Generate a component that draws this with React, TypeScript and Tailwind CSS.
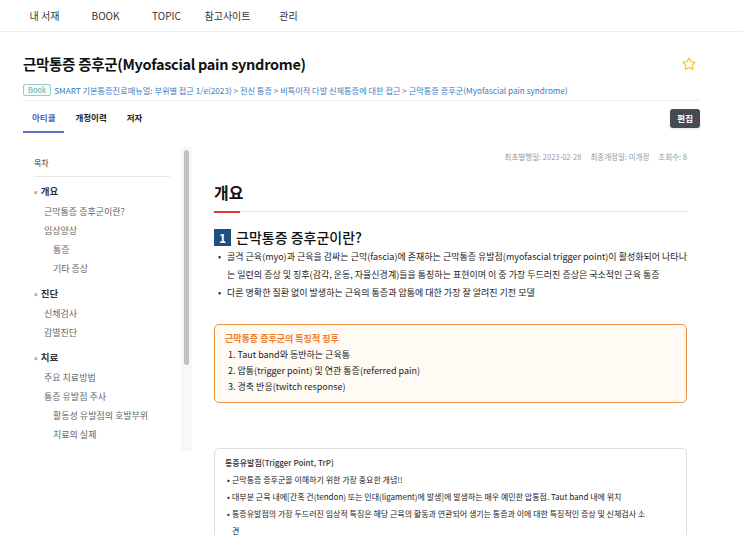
import { Star } from 'lucide-react';

const navItems = ['내 서재', 'BOOK', 'TOPIC', '참고사이트', '관리'];

interface TocGroup {
  title: string;
  items: { label: string; depth: number }[];
}

const toc: TocGroup[] = [
  {
    title: '개요',
    items: [
      { label: '근막통증 증후군이란?', depth: 1 },
      { label: '임상양상', depth: 1 },
      { label: '통증', depth: 2 },
      { label: '기타 증상', depth: 2 },
    ],
  },
  {
    title: '진단',
    items: [
      { label: '신체검사', depth: 1 },
      { label: '감별진단', depth: 1 },
    ],
  },
  {
    title: '치료',
    items: [
      { label: '주요 치료방법', depth: 1 },
      { label: '통증 유발점 주사', depth: 1 },
      { label: '활동성 유발점의 호발부위', depth: 2 },
      { label: '치료의 실제', depth: 2 },
    ],
  },
];

const signs = ['Taut band와 동반하는 근육통', '압통(trigger point) 및 연관 통증(referred pain)', '경축 반응(twitch response)'];

const trpNotes = [
  '근막통증 증후군을 이해하기 위한 가장 중요한 개념!!',
  '대부분 근육 내에[간혹 건(tendon) 또는 인대(ligament)에 발생]에 발생하는 매우 예민한 압통점. Taut band 내에 위치',
  '통증유발점의 가장 두드러진 임상적 특징은 해당 근육의 활동과 연관되어 생기는 통증과 이에 대한 특징적인 증상 및 신체검사 소견',
];

function Bullet({ children, tight }: { children: React.ReactNode; tight?: boolean }) {
  return (
    <li className="flex">
      <span className={tight ? 'w-[7px] shrink-0 pl-[2px]' : 'w-[13px] shrink-0 pl-[4px]'}>•</span>
      <span>{children}</span>
    </li>
  );
}

export default function App() {
  return (
    <div className="h-[535px] w-[743px] overflow-hidden bg-white font-['Noto_Sans_CJK_KR','Noto_Sans',sans-serif] text-[#222]">
      {/* top navigation */}
      <nav className="flex h-[32px] items-center border-b border-[#ececec] pl-[14px] text-[10px] text-[#333]">
        {navItems.map((item) => (
          <span key={item} className="w-[61px] text-center">
            {item}
          </span>
        ))}
      </nav>

      <div className="w-[700px] pl-[23px]">
        <div className="flex h-[52px] items-center justify-between pt-[12px]">
          <h1 className="text-[14.5px] font-semibold tracking-[-0.3px] text-[#111]">근막통증 증후군(Myofascial pain syndrome)</h1>
          <Star className="mr-[4px] h-[14px] w-[14px] text-[#f5c518]" strokeWidth={2} />
        </div>

        <div className="flex items-center border-b border-[#eee] pb-[4px] text-[8.2px] text-[#3d7cc0]">
          <span className="mr-[3px] rounded-[2px] border border-[#8fd0cf] bg-[#f4fbfb] px-[4px] text-[7.5px] leading-[10px] text-[#5aaeae]">Book</span>
          <span>
            SMART 기본통증진료매뉴얼: 부위별 접근 1/e(2023) <span className="text-[#888]">&gt;</span> 전신 통증{' '}
            <span className="text-[#888]">&gt;</span> 비특이적 다발 신체통증에 대한 접근{' '}
            <span className="text-[#888]">&gt;</span> 근막통증 증후군(Myofascial pain syndrome)
          </span>
        </div>

        {/* tabs */}
        <div className="flex items-center justify-between">
          <div className="flex text-[8.5px] font-semibold text-[#222]">
            <span className="border-b-2 border-[#5f74c9] px-[9px] pb-[7px] pt-[10px] text-[#4d66bf]">아티클</span>
            <span className="pl-[11px] pt-[10px]">개정이력</span>
            <span className="pl-[20px] pt-[10px]">저자</span>
          </div>
          <button className="mt-[2px] rounded-[3px] bg-[#464a53] px-[7px] py-[3px] text-[8.5px] font-semibold text-white shadow-sm">편집</button>
        </div>

        <div className="mt-[14px] flex">
          {/* table of contents */}
          <aside className="flex h-[304px] shrink-0">
            <div className="w-[147px] pl-[11px] pt-[10px] text-[9px]">
              <div className="border-b border-[#e6e6e6] pb-[7px] text-[8px] text-[#333]">목차</div>
              {toc.map((group, i) => (
                <div key={group.title} className={i === 0 ? 'mt-[4px]' : 'mt-[5px]'}>
                  <div className="flex h-[21px] items-center text-[9.5px] font-semibold text-[#333]">
                    <span className="mr-[3px] text-[8px] font-normal text-[#555]">«</span>
                    {group.title}
                  </div>
                  {group.items.map((item) => (
                    <div
                      key={item.label}
                      className={`flex h-[19px] items-center text-[#666] ${item.depth === 2 ? 'pl-[19px]' : 'pl-[10px]'}`}
                    >
                      {item.label}
                    </div>
                  ))}
                </div>
              ))}
            </div>
            {/* scroll track */}
            <div className="ml-[11px] w-[11px] bg-[#f8f8f8] px-[3px] pt-[3px]">
              <div className="h-[215px] rounded-full bg-[#c1c1c1]" />
            </div>
          </aside>

          {/* article */}
          <main className="ml-[22px] w-[473px] shrink-0">
            <div className="pt-[4px] text-right text-[7.5px] text-[#999]">
              최초발행일: 2023-02-28<span className="ml-[9px]">최종개정일: 미개정</span>
              <span className="ml-[9px]">조회수: 8</span>
            </div>

            <h2 className="mt-[18px] text-[16px] font-bold text-[#111]">개요</h2>
            <div className="mt-[7px] flex items-start">
              <div className="h-[2px] w-[26px] bg-[#e03a3a]" />
              <div className="h-[1px] flex-1 bg-[#e6e6e6]" />
            </div>

            <div className="mt-[14px] flex items-center">
              <span className="flex h-[17px] w-[17px] items-center justify-center bg-[#1e4f7f] text-[12px] font-bold text-white">1</span>
              <span className="ml-[5px] text-[14px] font-medium text-[#111]">근막통증 증후군이란?</span>
            </div>

            <ul className="text-[9px] leading-[18px] text-[#222]">
              <Bullet>
                골격 근육(myo)과 근육을 감싸는 근막(fascia)에 존재하는 근막통증 유발점(myofascial trigger point)이 활성화되어 나타나는 일련의 증상 및 징후(감각, 운동, 자율신경계)들을 통칭하는 표현이며 이 중 가장 두드러진 증상은 국소적인 근육 통증
              </Bullet>
              <Bullet>다른 명확한 질환 없이 발생하는 근육의 통증과 압통에 대한 가장 잘 알려진 기전 모델</Bullet>
            </ul>

            <div className="mt-[22px] rounded-[5px] border-[1.5px] border-[#ee913f] bg-[#fffaf3] px-[10px] pb-[7px] pt-[6px] text-[9px] leading-[16px]">
              <div className="font-semibold text-[#ee7d2e]">근막통증 증후군의 특징적 징후</div>
              <ol className="text-[#222]">
                {signs.map((s, i) => (
                  <li key={s} className="pl-[3px]">
                    {i + 1}. {s}
                  </li>
                ))}
              </ol>
            </div>

            <div className="mt-[45px] rounded-[5px] border border-[#dcdcdc] pl-[10px] pr-[34px] pt-[5px] text-[8px] leading-[17px]">
              <div className="font-medium text-[#333]">통증유발점(Trigger Point, TrP)</div>
              <ul className="text-[#222]">
                {trpNotes.map((n) => (
                  <Bullet key={n} tight>
                    {n}
                  </Bullet>
                ))}
              </ul>
            </div>
          </main>
        </div>
      </div>
    </div>
  );
}
